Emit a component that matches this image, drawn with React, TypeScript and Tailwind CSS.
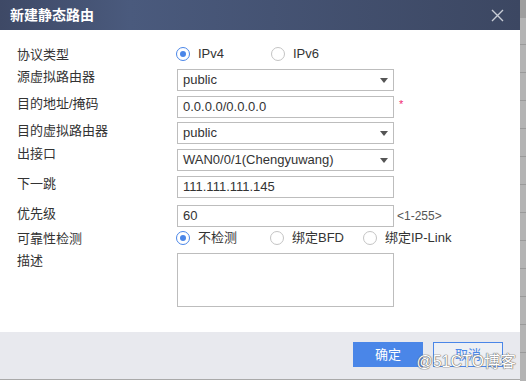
import React from 'react';

const font = { fontFamily: '"Liberation Sans", Arial, "Noto Sans CJK SC", sans-serif' };

function Radio({ checked, label }: { checked?: boolean; label: string }) {
  return (
    <div className="flex items-center h-[16px]">
      <span
        className={
          checked
            ? 'w-[14px] h-[14px] rounded-full border border-[#4a86e8] flex items-center justify-center bg-white'
            : 'w-[14px] h-[14px] rounded-full border border-[#c4c4c4] bg-white'
        }
      >
        {checked && <span className="w-[6px] h-[6px] rounded-full bg-[#4a86e8]" />}
      </span>
      <span className="ml-[8px] text-[13px] text-[#333] leading-[16px]">{label}</span>
    </div>
  );
}

function Select({ value }: { value: string }) {
  return (
    <div className="w-[217px] h-[22px] border border-[#bdbdbd] bg-white flex items-center justify-between pl-[5px] pr-[5px]">
      <span className="text-[13px] text-[#333] leading-[16px]">{value}</span>
      <span className="w-0 h-0 border-l-[4px] border-r-[4px] border-t-[5px] border-l-transparent border-r-transparent border-t-[#555]" />
    </div>
  );
}

function TextBox({ value }: { value: string }) {
  return (
    <div className="w-[217px] h-[22px] border border-[#bdbdbd] bg-white flex items-center pl-[5px]">
      <span className="text-[13px] text-[#333] leading-[16px]">{value}</span>
    </div>
  );
}

export default function App() {
  return (
    <div className="w-[526px] h-[381px] flex bg-white overflow-hidden" style={font}>
      <div className="w-[520px] h-[381px] flex flex-col">
        {/* header */}
        <div className="h-[30px] flex items-center justify-between pl-[10px] pr-[16px] bg-gradient-to-r from-[#3e4966] via-[#4a5a7d] via-25% to-[#3c4762]">
          <span className="text-white font-bold text-[14px] leading-[16px]">新建静态路由</span>
          <svg width="13" height="13" viewBox="0 0 13 13">
            <path d="M1 1L12 12M12 1L1 12" stroke="#c9cdd6" strokeWidth="1.4" />
          </svg>
        </div>

        {/* body */}
        <div className="h-[302px] pt-[10px] text-[13px] text-[#333] leading-[16px]">
          <div className="flex h-[27px]">
            <div className="w-[160px] pl-[17px] pt-[7px]">协议类型</div>
            <div className="pt-[6px] pl-[16px] flex">
              <div className="w-[95px]"><Radio checked label="IPv4" /></div>
              <Radio label="IPv6" />
            </div>
          </div>
          <div className="flex h-[27px]">
            <div className="w-[160px] pl-[17px] pt-[2px]">源虚拟路由器</div>
            <div className="pt-[2px] pl-[17px]"><Select value="public" /></div>
          </div>
          <div className="flex h-[26px]">
            <div className="w-[160px] pl-[17px] pt-[2px]">目的地址/掩码</div>
            <div className="pt-[2px] pl-[17px] flex">
              <TextBox value="0.0.0.0/0.0.0.0" />
              <span className="ml-[5px] mt-[2px] text-[#f0286e] text-[11px] leading-[12px]">*</span>
            </div>
          </div>
          <div className="flex h-[26px]">
            <div className="w-[160px] pl-[17px] pt-[3px]">目的虚拟路由器</div>
            <div className="pt-[2px] pl-[17px]"><Select value="public" /></div>
          </div>
          <div className="flex h-[27px]">
            <div className="w-[160px] pl-[17px] pt-[0px]">出接口</div>
            <div className="pt-[3px] pl-[17px]"><Select value="WAN0/0/1(Chengyuwang)" /></div>
          </div>
          <div className="flex h-[28px]">
            <div className="w-[160px] pl-[17px] pt-[3px]">下一跳</div>
            <div className="pt-[3px] pl-[17px]"><TextBox value="111.111.111.145" /></div>
          </div>
          <div className="flex h-[29px]">
            <div className="w-[160px] pl-[17px] pt-[5px]">优先级</div>
            <div className="pt-[4px] pl-[17px] flex">
              <TextBox value="60" />
              <span className="ml-[3px] mt-[3px] text-[12px] text-[#555]">&lt;1-255&gt;</span>
            </div>
          </div>
          <div className="flex h-[18px]">
            <div className="w-[160px] pl-[17px] pt-[1px]">可靠性检测</div>
            <div className="pl-[16px] flex">
              <div className="w-[94px]"><Radio checked label="不检测" /></div>
              <div className="w-[93px]"><Radio label="绑定BFD" /></div>
              <Radio label="绑定IP-Link" />
            </div>
          </div>
          <div className="flex h-[62px]">
            <div className="w-[160px] pl-[17px] pt-[5px]">描述</div>
            <div className="pt-[5px] pl-[17px]">
              <div className="w-[217px] h-[54px] border border-[#bdbdbd] bg-white" />
            </div>
          </div>
        </div>

        {/* footer */}
        <div className="relative h-[48px] bg-[#e8e9ee] border-b border-[#a9a9a9] flex items-start justify-end pt-[10px] pr-[17px] gap-[10px]">
          <button className="w-[70px] h-[25px] bg-[#4a86e8] text-white text-[13px]">确定</button>
          <button className="w-[70px] h-[25px] border border-[#4a86e8] text-[#4a86e8] text-[13px] bg-[#eef0f4]">取消</button>
          <span
            className="absolute right-[4px] top-[20px] text-[16px] leading-[20px] text-white"
            style={{ textShadow: '0 0 1px #666, 0 0 1px #666, 0 0 1px #666' }}
          >
            @51CTO博客
          </span>
        </div>
        <div className="h-[1px] bg-white" />
      </div>

      {/* background strip */}
      <div className="w-[6px] h-[381px] bg-[#b4b4b4] flex flex-col">
        <div className="h-[18px] bg-[#9e9e9e]" />
        <div className="h-[27px] border-b border-[#9a9a9a]" />
        <div className="h-[28px] border-b border-[#9a9a9a]" />
        <div className="h-[28px] border-b border-[#9a9a9a]" />
        <div className="h-[28px] border-b border-[#9a9a9a]" />
        <div className="h-[28px] border-b border-[#9a9a9a]" />
        <div className="h-[28px] border-b border-[#9a9a9a]" />
        <div className="h-[28px] border-b border-[#9a9a9a]" />
        <div className="h-[28px] border-b border-[#9a9a9a]" />
        <div className="h-[28px] border-b border-[#9a9a9a]" />
        <div className="h-[28px] border-b border-[#9a9a9a]" />
        <div className="h-[28px] border-b border-[#9a9a9a]" />
        <div className="h-[28px] border-b border-[#9a9a9a]" />
      </div>
    </div>
  );
}
